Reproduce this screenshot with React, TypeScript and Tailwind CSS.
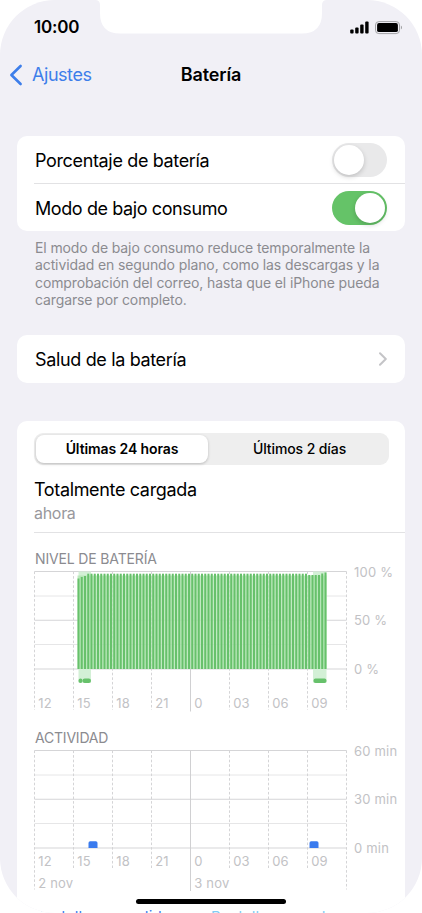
import React from "react";

const HOURS = ["12", "15", "18", "21", "0", "03", "06", "09"];
const STEP = 39;
const CHART_W = 312;
const BAR_PITCH = 3.25;

const LEVELS: number[] = Array.from({ length: 77 }, (_, i) => {
  if (i === 0) return 90.5;
  if (i === 1) return 92;
  if (i === 2) return 93;
  if (i === 75) return 95.5;
  if (i === 76) return 96.5;
  if (i > 70) return 94;
  return 95.3;
});

function StatusBar() {
  return (
    <div className="flex h-[50px] items-center justify-between pl-[34px] pr-[18px] pt-[5px]">
      <span className="text-[17px] font-semibold tracking-[-0.2px]">10:00</span>
      <svg width="54" height="14" viewBox="0 0 54 14">
        <rect x="0.2" y="8.5" width="3.4" height="4" rx="1" />
        <rect x="5.2" y="6.5" width="3.4" height="6" rx="1" />
        <rect x="10.2" y="3.5" width="3.4" height="9" rx="1" />
        <rect x="15.2" y="0.5" width="3.4" height="12" rx="1" />
        <rect x="25.5" y="0.6" width="24" height="12" rx="3.4" fill="none" stroke="#a3a3a6" strokeWidth="1" />
        <rect x="27.1" y="2.1" width="20.8" height="9" rx="1.9" />
        <path d="M50.9 4.6c1.5.5 1.5 3.5 0 4z" fill="#a3a3a6" />
      </svg>
    </div>
  );
}

function NavBar() {
  return (
    <div className="grid h-[50px] grid-cols-[1fr_auto_1fr] items-center px-[9px] pb-px text-[18px]">
      <div className="flex items-center gap-[9px] text-[#3d7eea]">
        <svg width="14" height="22" viewBox="0 0 14 22" fill="none" stroke="currentColor" strokeWidth="2.6" strokeLinecap="round" strokeLinejoin="round">
          <path d="M11.6 2 2.4 11l9.2 9" />
        </svg>
        <span className="tracking-[-0.45px]">Ajustes</span>
      </div>
      <h1 className="font-semibold tracking-[-0.15px]">Batería</h1>
    </div>
  );
}

function Toggle({ on }: { on: boolean }) {
  return (
    <div className={`flex h-[34px] w-[55px] items-center rounded-full px-[2px] ${on ? "justify-end bg-[#65c368]" : "justify-start bg-[#e9e9ea]"}`}>
      <div className="size-[30px] rounded-full bg-white shadow-[0_2px_5px_rgba(0,0,0,0.18)]" />
    </div>
  );
}

function Segmented() {
  return (
    <div className="ml-[17px] mr-4 flex h-8 rounded-[9px] bg-[#eeeeee] p-[2px] text-[14px]">
      <div className="flex w-[172px] items-center justify-center rounded-[8px] bg-white pb-px font-semibold tracking-[-0.1px] shadow-[0_1px_3px_rgba(0,0,0,0.22)]">
        Últimas 24 horas
      </div>
      <div className="flex flex-1 items-center justify-center pb-px pl-1 font-medium tracking-[-0.1px]">Últimos 2 días</div>
    </div>
  );
}

function Grid({ dayLines }: { dayLines: boolean }) {
  const short = dayLines ? 117.5 : 138.5;
  return (
    <g>
      {[0, 24.5, 48.75, 73, 97.5].map((y, i) => (
        <line key={y} x1="0" x2={CHART_W} y1={y} y2={y} stroke={i % 2 ? "#e6e6e7" : "#d5d5d7"} />
      ))}
      {Array.from({ length: 9 }, (_, i) => {
        const solid = i === 4;
        const long = dayLines && (i === 0 || i === 8);
        return (
          <line
            key={i}
            x1={i * STEP}
            x2={i * STEP}
            y1="0"
            y2={solid ? (dayLines ? 140.5 : 140) : long ? 139 : short}
            stroke={solid ? "#d0d0d2" : "#d4d4d6"}
            strokeDasharray={solid ? undefined : "2.6 2"}
          />
        );
      })}
    </g>
  );
}

function HourLabels({ y }: { y: number }) {
  return (
    <g>
      {HOURS.map((h, i) => (
        <text key={h} x={i * STEP + 3.7} y={y}>{h}</text>
      ))}
    </g>
  );
}

function AxisLabels({ labels }: { labels: string[] }) {
  return (
    <g>
      {labels.map((l, i) => (
        <text key={l} x={CHART_W + 7.5} y={i * 48.75 + 5}>{l}</text>
      ))}
    </g>
  );
}

const chartText = "block overflow-visible font-['Inter',sans-serif] text-[13px] tracking-[0.2px] fill-[#c2c2c5]";

function LevelChart() {
  return (
    <svg className={chartText} width="388" height="154" viewBox="-17.5 -4.5 388 154">
      <Grid dayLines={false} />
      <rect x="44" y="0" width="12.5" height="111" fill="#d3f0d6" />
      <rect x="278.5" y="0" width="13.5" height="111" fill="#d3f0d6" />
      <rect x="43" y="4" width="249" height="93.5" fill="#b0e5b1" opacity="0.8" />
      {LEVELS.map((v, i) => (
        <rect key={i} x={43 + i * BAR_PITCH} y={97.5 - v} width="2" height={v} fill="#67c16b" />
      ))}
      <rect x="44" y="107" width="4" height="4.5" rx="2" fill="#67c16b" />
      <rect x="48" y="107" width="8.5" height="4.5" rx="2.2" fill="#67c16b" />
      <rect x="279" y="107" width="13" height="4.5" rx="2" fill="#67c16b" />
      <HourLabels y={136.5} />
      <AxisLabels labels={["100 %", "50 %", "0 %"]} />
    </svg>
  );
}

function ActivityChart() {
  return (
    <svg className={chartText} width="388" height="154" viewBox="-17.5 -4.5 388 154">
      <Grid dayLines />
      {[54, 275].map((x) => (
        <path key={x} d={`M${x} 97.5v-5q0-1.7 1.7-1.7h5.6q1.7 0 1.7 1.7v5z`} fill="#3a7bee" />
      ))}
      <HourLabels y={115.5} />
      <text x="3.7" y="137.5">2 nov</text>
      <text x="159.7" y="137.5">3 nov</text>
      <AxisLabels labels={["60 min", "30 min", "0 min"]} />
    </svg>
  );
}

export default function App() {
  return (
    <div className="h-[913px] w-[422px] overflow-hidden bg-white font-['Inter',sans-serif] text-black">
      <div className="relative h-[913px] overflow-hidden rounded-[55px] bg-[#f1f0f6]">
        <svg className="absolute left-[96px] top-0" width="230" height="34" viewBox="0 0 230 34" fill="#fff">
          <path d="M0 0q4 .5 4 5v8q0 20.5 20 20.5h182q20 0 20-20.5V5q0-4.5 4-5z" />
        </svg>
        <StatusBar />
        <NavBar />

        <section className="mx-[17px] mt-9 h-[95px] rounded-[10px] bg-white text-[18px]">
          <div className="flex h-[47px] items-center justify-between pl-[18px] pr-[18px] pt-px">
            <span className="pt-px tracking-[-0.35px]">Porcentaje de batería</span>
            <Toggle on={false} />
          </div>
          <div className="ml-[17px] flex h-12 items-center justify-between border-t border-[#e2e2e4] pl-px pr-[18px] pt-px">
            <span className="tracking-[-0.4px]">Modo de bajo consumo</span>
            <Toggle on />
          </div>
        </section>
        <p className="ml-[35px] mt-[8px] whitespace-nowrap text-[14px] leading-[17.3px] tracking-[-0.11px] text-[#8b8b90]">
          El modo de bajo consumo reduce temporalmente la
          <br />
          actividad en segundo plano, como las descargas y la
          <br />
          comprobación del correo, hasta que el iPhone pueda
          <br />
          cargarse por completo.
        </p>

        <section className="mx-[17px] mt-[27px] flex h-12 items-center justify-between rounded-[10px] bg-white px-[18px] text-[18px]">
          <span className="tracking-[-0.35px]">Salud de la batería</span>
          <svg width="8" height="14" viewBox="0 0 8 14" fill="none" stroke="#c4c4c7" strokeWidth="2" strokeLinecap="round" strokeLinejoin="round">
            <path d="m1 1.2 5.8 5.8L1 12.8" />
          </svg>
        </section>

        <section className="mx-[17px] mt-[38px] h-[520px] rounded-t-[10px] bg-white pt-3">
          <Segmented />
          <div className="ml-[17px] h-[68px] border-b border-[#e2e2e4] pt-[13px]">
            <div className="text-[18px] leading-6 tracking-[-0.35px]">Totalmente cargada</div>
            <div className="text-[16px] leading-[23px] tracking-[-0.3px] text-[#98989c]">ahora</div>
          </div>
          <h2 className="ml-[18px] mt-[17px] h-[17px] text-[14px] leading-[18px] tracking-[-0.15px] text-[#8b8b90]">NIVEL DE BATERÍA</h2>
          <LevelChart />
          <h2 className="ml-[18px] mt-[8px] h-[17px] text-[14px] leading-[18px] tracking-[-0.2px] text-[#8b8b90]">ACTIVIDAD</h2>
          <ActivityChart />
          <div className="ml-[17px] mt-[8px] flex whitespace-nowrap text-[15px] leading-[17px] tracking-[0.1px]">
            <span className="w-[177px] text-[#3a7bee]">Pantalla encendida</span>
            <span className="text-[#82cbf3]">Pantalla apagada</span>
          </div>
        </section>
        <div className="absolute left-[136px] top-[899px] h-[5px] w-[150px] rounded-full bg-black" />
      </div>
    </div>
  );
}
